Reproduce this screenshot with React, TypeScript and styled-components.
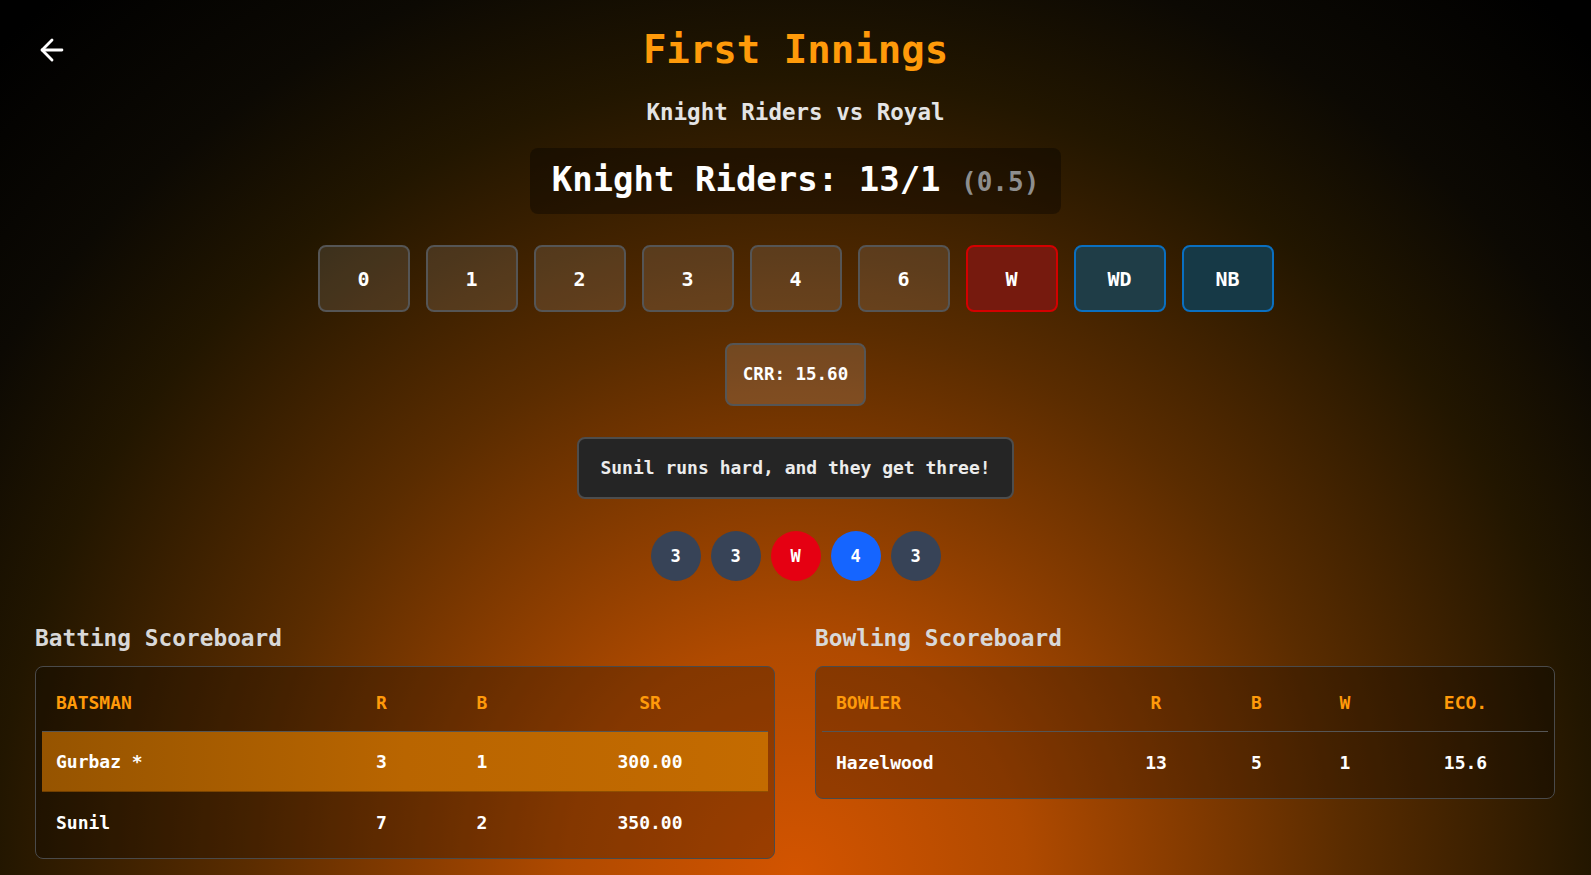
import React from "react";
import styled, { createGlobalStyle } from "styled-components";
import { ArrowLeft } from "lucide-react";

const Global = createGlobalStyle`
  html, body { margin: 0; padding: 0; background: #000; }
  * { box-sizing: border-box; }
  body { font-family: "DejaVu Sans Mono", "Liberation Mono", monospace; }
`;

const Page = styled.div`
  min-height: 100vh;
  color: #fff;
  background: radial-gradient(
    circle at 50% 100%,
    #d35400 0px,
    #b04a00 230px,
    #5a2c00 550px,
    #221600 800px,
    #0c0903 950px,
    #000 1150px
  );
  padding: 27px 0 16px;
  display: flex;
  flex-direction: column;
  align-items: center;
`;

const Header = styled.header`
  width: 100%;
  display: grid;
  grid-template-columns: 1fr auto 1fr;
  align-items: center;
  padding: 0 35px;
`;

const BackButton = styled.button`
  justify-self: start;
  background: none;
  border: none;
  padding: 0;
  color: #fff;
  display: flex;
  cursor: pointer;
`;

const Title = styled.h1`
  margin: 0;
  font-size: 39px;
  line-height: 46px;
  font-weight: 700;
  color: #ff9a0a;
`;

const Subtitle = styled.h2`
  margin: 26px 0 0;
  font-size: 22.5px;
  line-height: 26px;
  font-weight: 700;
  color: #e4e4e4;
`;

const ScoreBox = styled.div`
  margin-top: 23px;
  padding: 11px 22px;
  border-radius: 8px;
  background: rgba(0, 0, 0, 0.35);
  font-size: 34px;
  line-height: 41px;
  font-weight: 700;
  color: #fff;
`;

const Overs = styled.span`
  font-size: 26px;
  color: #8e8e8e;
  font-weight: 700;
`;

const ButtonRow = styled.div`
  margin-top: 31px;
  display: flex;
  gap: 16px;
`;

type Kind = "run" | "wicket" | "extra";

const RunButton = styled.button<{ $kind: Kind; $bg?: string }>`
  width: 92px;
  height: 67px;
  border-radius: 8px;
  border: 2px solid
    ${(p) => (p.$kind === "wicket" ? "#d40000" : p.$kind === "extra" ? "#0a6fc0" : "#555")};
  background: ${(p) =>
    p.$kind === "wicket" ? "#761a0e" : p.$kind === "extra" ? p.$bg : "rgba(255,255,255,0.11)"};
  color: #fff;
  font-family: "DejaVu Sans Mono", monospace;
  font-size: 20px;
  font-weight: 700;
  cursor: pointer;
`;

const InfoBox = styled.div`
  margin-top: 31px;
  padding: 19px 16px;
  border: 2px solid #555;
  border-radius: 8px;
  background: rgba(255, 255, 255, 0.13);
  font-size: 17.5px;
  line-height: 21px;
  font-weight: 700;
`;

const Commentary = styled.div`
  margin-top: 31px;
  padding: 18px 21px;
  border: 2px solid #4d4d4d;
  border-radius: 8px;
  background: #252525;
  font-size: 18px;
  line-height: 22px;
  font-weight: 700;
  color: #ececec;
`;

const Balls = styled.div`
  margin-top: 32px;
  display: flex;
  gap: 10px;
`;

const Ball = styled.div<{ $color: string }>`
  width: 50px;
  height: 50px;
  border-radius: 50%;
  background: ${(p) => p.$color};
  display: flex;
  align-items: center;
  justify-content: center;
  font-size: 17px;
  font-weight: 700;
`;

const Boards = styled.section`
  width: 100%;
  margin-top: 45px;
  padding: 0 36px 0 35px;
  display: grid;
  grid-template-columns: 1fr 1fr;
  gap: 40px;
  align-items: start;
`;

const Board = styled.div`
  display: flex;
  flex-direction: column;
  gap: 15px;
`;

const BoardTitle = styled.h3`
  margin: 0;
  font-size: 22.8px;
  line-height: 25px;
  font-weight: 700;
  color: #d8d8d8;
`;

const Table = styled.div`
  border: 1px solid #4a4a4a;
  border-radius: 8px;
  padding: 6px;
  background: rgba(0, 0, 0, 0.25);
`;

const Row = styled.div<{ $cols: string; $head?: boolean; $active?: boolean }>`
  display: grid;
  grid-template-columns: ${(p) => p.$cols};
  align-items: center;
  height: ${(p) => (p.$head ? "59px" : "60px")};
  border-bottom: ${(p) => (p.$head ? "1px solid #555" : "1px solid rgba(0,0,0,0.25)")};
  background: ${(p) =>
    p.$active ? "linear-gradient(90deg, #965400 0%, #b96500 50%, #c46b00 100%)" : "transparent"};
  color: ${(p) => (p.$head ? "#ff9a0a" : "#fff")};
  font-size: 18px;
  font-weight: 700;
  &:last-child {
    border-bottom: none;
  }
`;

const Cell = styled.div<{ $left?: boolean }>`
  text-align: ${(p) => (p.$left ? "left" : "center")};
  padding-left: ${(p) => (p.$left ? "14px" : "0")};
`;

const BAT_COLS = "289px 101px 100px 1fr";
const BOWL_COLS = "284px 100px 101px 76px 1fr";

const buttons: { label: string; kind: Kind; bg?: string }[] = [
  { label: "0", kind: "run" },
  { label: "1", kind: "run" },
  { label: "2", kind: "run" },
  { label: "3", kind: "run" },
  { label: "4", kind: "run" },
  { label: "6", kind: "run" },
  { label: "W", kind: "wicket" },
  { label: "WD", kind: "extra", bg: "#1f3d47" },
  { label: "NB", kind: "extra", bg: "#163946" },
];

const recent = [
  { v: "3", c: "#374357" },
  { v: "3", c: "#374357" },
  { v: "W", c: "#e50012" },
  { v: "4", c: "#1565ff" },
  { v: "3", c: "#374357" },
];

export default function App() {
  return (
    <>
      <Global />
      <Page>
        <Header>
          <BackButton aria-label="Back">
            <ArrowLeft size={34} strokeWidth={2} />
          </BackButton>
          <Title>First Innings</Title>
          <span />
        </Header>
        <Subtitle>Knight Riders vs Royal</Subtitle>
        <ScoreBox>
          Knight Riders: 13/1 <Overs>(0.5)</Overs>
        </ScoreBox>
        <ButtonRow>
          {buttons.map((b) => (
            <RunButton key={b.label} $kind={b.kind} $bg={b.bg}>
              {b.label}
            </RunButton>
          ))}
        </ButtonRow>
        <InfoBox>CRR: 15.60</InfoBox>
        <Commentary>Sunil runs hard, and they get three!</Commentary>
        <Balls>
          {recent.map((b, i) => (
            <Ball key={i} $color={b.c}>
              {b.v}
            </Ball>
          ))}
        </Balls>
        <Boards>
          <Board>
            <BoardTitle>Batting Scoreboard</BoardTitle>
            <Table>
              <Row $cols={BAT_COLS} $head>
                <Cell $left>BATSMAN</Cell>
                <Cell>R</Cell>
                <Cell>B</Cell>
                <Cell>SR</Cell>
              </Row>
              <Row $cols={BAT_COLS} $active>
                <Cell $left>Gurbaz *</Cell>
                <Cell>3</Cell>
                <Cell>1</Cell>
                <Cell>300.00</Cell>
              </Row>
              <Row $cols={BAT_COLS}>
                <Cell $left>Sunil</Cell>
                <Cell>7</Cell>
                <Cell>2</Cell>
                <Cell>350.00</Cell>
              </Row>
            </Table>
          </Board>
          <Board>
            <BoardTitle>Bowling Scoreboard</BoardTitle>
            <Table>
              <Row $cols={BOWL_COLS} $head>
                <Cell $left>BOWLER</Cell>
                <Cell>R</Cell>
                <Cell>B</Cell>
                <Cell>W</Cell>
                <Cell>ECO.</Cell>
              </Row>
              <Row $cols={BOWL_COLS}>
                <Cell $left>Hazelwood</Cell>
                <Cell>13</Cell>
                <Cell>5</Cell>
                <Cell>1</Cell>
                <Cell>15.6</Cell>
              </Row>
            </Table>
          </Board>
        </Boards>
      </Page>
    </>
  );
}
